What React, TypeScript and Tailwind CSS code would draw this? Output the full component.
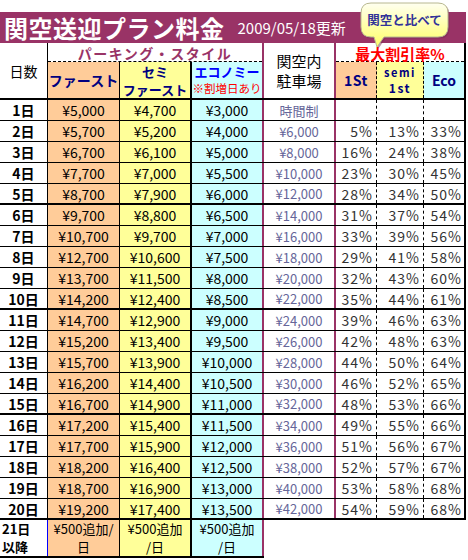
const font = { fontFamily: '"Noto Sans CJK JP", "Liberation Sans", sans-serif' };

const rows = [
  ["1日", "¥5,000", "¥4,700", "¥3,000", "時間制", "", "", ""],
  ["2日", "¥5,700", "¥5,200", "¥4,000", "¥6,000", "5%", "13%", "33%"],
  ["3日", "¥6,700", "¥6,100", "¥5,000", "¥8,000", "16%", "24%", "38%"],
  ["4日", "¥7,700", "¥7,000", "¥5,500", "¥10,000", "23%", "30%", "45%"],
  ["5日", "¥8,700", "¥7,900", "¥6,000", "¥12,000", "28%", "34%", "50%"],
  ["6日", "¥9,700", "¥8,800", "¥6,500", "¥14,000", "31%", "37%", "54%"],
  ["7日", "¥10,700", "¥9,700", "¥7,000", "¥16,000", "33%", "39%", "56%"],
  ["8日", "¥12,700", "¥10,600", "¥7,500", "¥18,000", "29%", "41%", "58%"],
  ["9日", "¥13,700", "¥11,500", "¥8,000", "¥20,000", "32%", "43%", "60%"],
  ["10日", "¥14,200", "¥12,400", "¥8,500", "¥22,000", "35%", "44%", "61%"],
  ["11日", "¥14,700", "¥12,900", "¥9,000", "¥24,000", "39%", "46%", "63%"],
  ["12日", "¥15,200", "¥13,400", "¥9,500", "¥26,000", "42%", "48%", "63%"],
  ["13日", "¥15,700", "¥13,900", "¥10,000", "¥28,000", "44%", "50%", "64%"],
  ["14日", "¥16,200", "¥14,400", "¥10,500", "¥30,000", "46%", "52%", "65%"],
  ["15日", "¥16,700", "¥14,900", "¥11,000", "¥32,000", "48%", "53%", "66%"],
  ["16日", "¥17,200", "¥15,400", "¥11,500", "¥34,000", "49%", "55%", "66%"],
  ["17日", "¥17,700", "¥15,900", "¥12,000", "¥36,000", "51%", "56%", "67%"],
  ["18日", "¥18,200", "¥16,400", "¥12,500", "¥38,000", "52%", "57%", "67%"],
  ["19日", "¥18,700", "¥16,900", "¥13,000", "¥40,000", "53%", "58%", "68%"],
  ["20日", "¥19,200", "¥17,400", "¥13,500", "¥42,000", "54%", "59%", "68%"],
];

function Row({ r, thick }: { r: string[]; thick: boolean }) {
  return (
    <div
      className={`grid grid-cols-[48px_72px_72px_72px_72px_41px_47px_42px] h-[21px] border-black text-[14px] leading-none text-black ${
        thick ? "border-b-2" : "border-b"
      }`}
    >
      <div className="flex items-center justify-center font-bold border-r border-black">{r[0]}</div>
      <div className="flex items-center justify-center bg-[#FFCC99] border-r border-black">{r[1]}</div>
      <div className="flex items-center justify-center bg-[#FFFF99] border-r-2 border-black">{r[2]}</div>
      <div className="flex items-center justify-center bg-[#CCFFFF] border-r-2 border-[#993366]">{r[3]}</div>
      <div className="flex items-center justify-center text-[13px] text-[#666699] border-r-2 border-[#993366]">{r[4]}</div>
      <div className="flex items-center justify-end pr-[3px] text-[#333333] tracking-[1px] border-r border-dashed border-black">{r[5]}</div>
      <div className="flex items-center justify-end pr-[3px] text-[#333333] tracking-[1px] border-r border-dashed border-black">{r[6]}</div>
      <div className="flex items-center justify-end pr-[2px] text-[#333333] tracking-[1px] border-r-2 border-black">{r[7]}</div>
    </div>
  );
}

export default function App() {
  return (
    <div className="relative w-[468px] h-[560px] bg-white overflow-hidden" style={font}>
      {/* タイトル */}
      <div className="mt-[12px] w-[466px] h-[31px] bg-[#993366] flex items-center text-white">
        <span className="pl-[4px] text-[24px] font-bold leading-none tracking-[0.5px]">関空送迎プラン料金</span>
        <span className="ml-[13px] text-[15px] leading-none">2009/05/18更新</span>
      </div>

      {/* 吹き出し */}
      <div className="absolute left-[360px] top-[2px]">
        <svg width="92" height="48" className="absolute left-0 top-0">
          <defs>
            <linearGradient id="bub" x1="0" y1="0" x2="0" y2="1">
              <stop offset="0" stopColor="#FFFFF0" />
              <stop offset="1" stopColor="#FFFF66" />
            </linearGradient>
          </defs>
          <path
            d="M11 1 H78 Q88 1 88 11 V25 Q88 35 78 35 H24 L17 45 L14 35 H11 Q1 35 1 25 V11 Q1 1 11 1 Z"
            fill="#7a2a52"
            opacity="0.5"
            transform="translate(1.5 1.5)"
          />
          <path
            d="M11 1 H78 Q88 1 88 11 V25 Q88 35 78 35 H24 L17 45 L14 35 H11 Q1 35 1 25 V11 Q1 1 11 1 Z"
            fill="url(#bub)"
            stroke="#B8B890"
            strokeWidth="1"
          />
        </svg>
        <div className="relative w-[89px] h-[36px] flex items-center justify-center text-[12.5px] font-bold text-[#333399] leading-none">
          関空と比べて
        </div>
      </div>

      {/* 見出し */}
      <div className="grid grid-cols-[48px_72px_72px_72px_72px_41px_47px_42px] grid-rows-[19px_36px] w-[466px] border-b-2 border-black leading-none">
        <div className="row-span-2 flex items-center justify-center text-[14px] border-r border-black">日数</div>
        <div className="col-span-3 border-r-2 border-[#993366]">
          <div className="h-full pt-[2px] flex items-center justify-center text-[14px] font-bold text-[#993366] tracking-[1.5px] border-b border-dashed border-black">
            パーキング・スタイル
          </div>
        </div>
        <div className="row-span-2 flex flex-col items-center justify-center gap-[5px] text-[15px] border-r-2 border-[#993366]">
          <span>関空内</span>
          <span>駐車場</span>
        </div>
        <div className="col-span-3 border-r-2 border-black">
          <div className="h-full pt-[2px] flex items-center justify-center text-[15px] font-bold text-[#FF0000] border-b border-dashed border-black">
            最大割引率%
          </div>
        </div>
        <div className="flex items-center justify-center bg-[#FFCC99] text-[14px] font-bold text-[#000080] border-r border-black">
          ファースト
        </div>
        <div className="flex flex-col items-center justify-center gap-[5px] bg-[#FFFF99] text-[13px] font-bold text-[#000080] border-r-2 border-black">
          <span>セミ</span>
          <span>ファースト</span>
        </div>
        <div className="flex flex-col items-center justify-center gap-[5px] bg-[#CCFFFF] border-r-2 border-[#993366]">
          <span className="text-[13px] font-bold text-[#0000FF]">エコノミー</span>
          <span className="text-[11.5px] text-[#FF0000]">※割増日あり</span>
        </div>
        <div className="flex items-center justify-center bg-[#FFCC99] text-[14px] font-bold text-[#000080] tracking-[0.5px] border-r border-dashed border-black">
          1St
        </div>
        <div className="flex flex-col items-center justify-center gap-[4px] bg-[#FFFF99] text-[11px] font-bold text-[#000080] tracking-[1.5px] border-r border-dashed border-black">
          <span>semi</span>
          <span className="text-[12px]">1st</span>
        </div>
        <div className="flex items-center justify-center bg-[#CCFFFF] text-[14px] font-bold text-[#000080] border-r-2 border-black">
          Eco
        </div>
      </div>

      {/* 料金表 */}
      <div className="w-[466px]">
        {rows.map((r, i) => (
          <Row key={r[0]} r={r} thick={(i + 1) % 5 === 0} />
        ))}
      </div>

      {/* 21日以降 */}
      <div className="grid grid-cols-[48px_72px_72px_72px] w-[264px] h-[38px] border-b-2 border-black text-[13px] leading-[18px]">
        <div className="flex flex-col justify-center pl-[2px] font-bold border-r border-[#0000FF]">
          <span>21日</span>
          <span>以降</span>
        </div>
        <div className="flex flex-col items-center justify-center bg-[#FFCC99] border-r border-black">
          <span>¥500追加/</span>
          <span>日</span>
        </div>
        <div className="flex flex-col items-center justify-center bg-[#FFFF99] border-r-2 border-black">
          <span>¥500追加</span>
          <span>/日</span>
        </div>
        <div className="flex flex-col items-center justify-center bg-[#CCFFFF] border-r-2 border-[#993366]">
          <span>¥500追加</span>
          <span>/日</span>
        </div>
      </div>
    </div>
  );
}
